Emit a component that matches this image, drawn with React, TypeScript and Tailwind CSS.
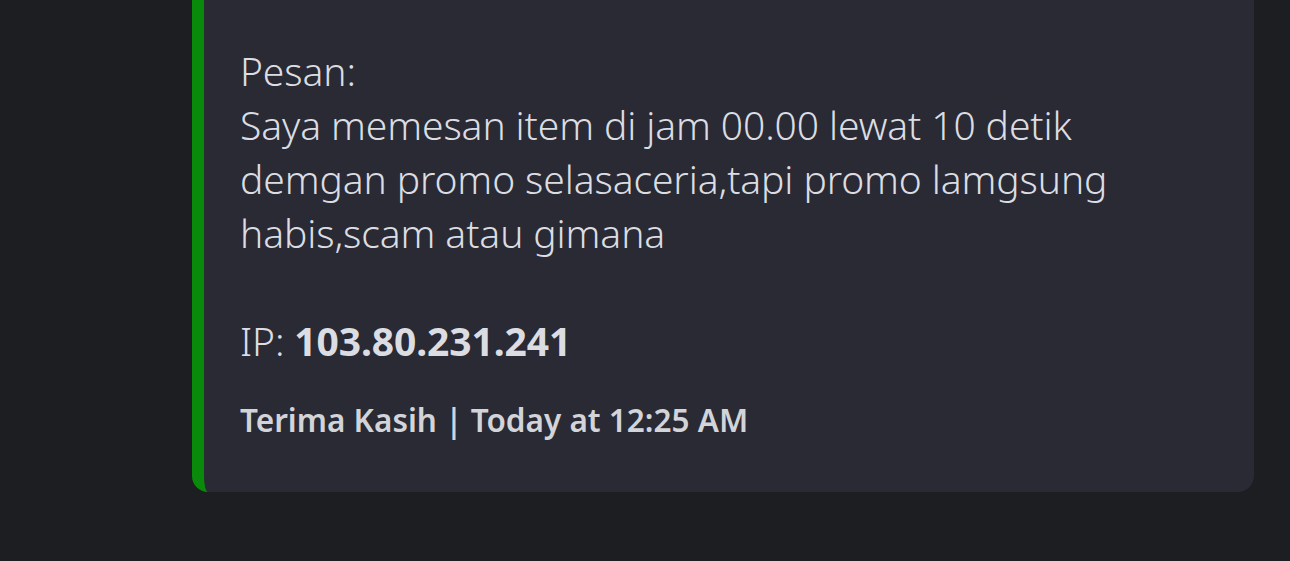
export default function App() {
  return (
    <div className="h-[561px] w-[1290px] overflow-hidden bg-[#1d1e22] font-['Noto_Sans',sans-serif]">
      <div className="ml-[192px] w-[1062px] rounded-b-2xl border-l-[12px] border-[#0a8a0a] bg-[#292a34] pb-[52px] pl-[36px] pr-8 pt-[44px]">
        <div className="text-[39px] font-light leading-[54px] tracking-[-0.1px] text-[#dbdde2]">
          <p>Pesan:</p>
          <p>Saya memesan item di jam 00.00 lewat 10 detik demgan promo selasaceria,tapi promo lamgsung habis,scam atau gimana</p>
          <p className="h-[54px]"></p>
          <p>
            IP: <span className="font-bold">103.80.231.241</span>
          </p>
        </div>
        <p className="mt-8 text-[31.5px] font-semibold leading-10 text-[#d2d4d9]">
          Terima Kasih | Today at 12:25 AM
        </p>
      </div>
    </div>
  );
}
